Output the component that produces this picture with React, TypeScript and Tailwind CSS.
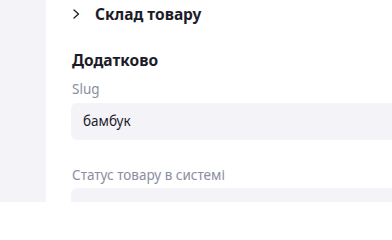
import React from "react";

export default function App() {
  return (
    <div className="flex w-[392px] h-[202px] overflow-hidden bg-white" style={{ fontFamily: '"Noto Sans", sans-serif' }}>
      <div className="w-[46px] shrink-0 bg-[#f4f4f8]" />
      <div className="flex-1 flex flex-col pl-[25px] pt-[2px]">
        <div className="shrink-0 flex items-center h-[24px]">
          <svg width="10" height="12" viewBox="0 0 10 12" className="text-[#1c1c28]">
            <path d="M3 2 L7.5 6 L3 10" fill="none" stroke="currentColor" strokeWidth="1.3" strokeLinecap="round" strokeLinejoin="round" />
          </svg>
          <span className="ml-[14px] text-[15.5px] font-bold text-[#1c1c28] leading-[24px] whitespace-nowrap">Склад товару</span>
        </div>
        <div className="shrink-0 mt-[22px] ml-px text-[15.5px] font-bold text-[#1c1c28] leading-[24px]">Додатково</div>
        <div className="shrink-0 mt-[7px] ml-px text-[13.5px] text-[#8a8ea0] leading-[20px]">Slug</div>
        <div className="shrink-0 mt-[4px] h-[37px] rounded-l-[6px] bg-[#f4f4f8] flex items-center pl-[12px] text-[13.5px] text-[#1c1c28]">бамбук</div>
        <div className="shrink-0 mt-[25px] ml-px text-[13.5px] text-[#8a8ea0] leading-[20px] whitespace-nowrap">Статус товару в системі</div>
        <div className="shrink-0 mt-[3px] h-[38px] rounded-l-[6px] bg-[#f4f4f8]" />
      </div>
    </div>
  );
}
